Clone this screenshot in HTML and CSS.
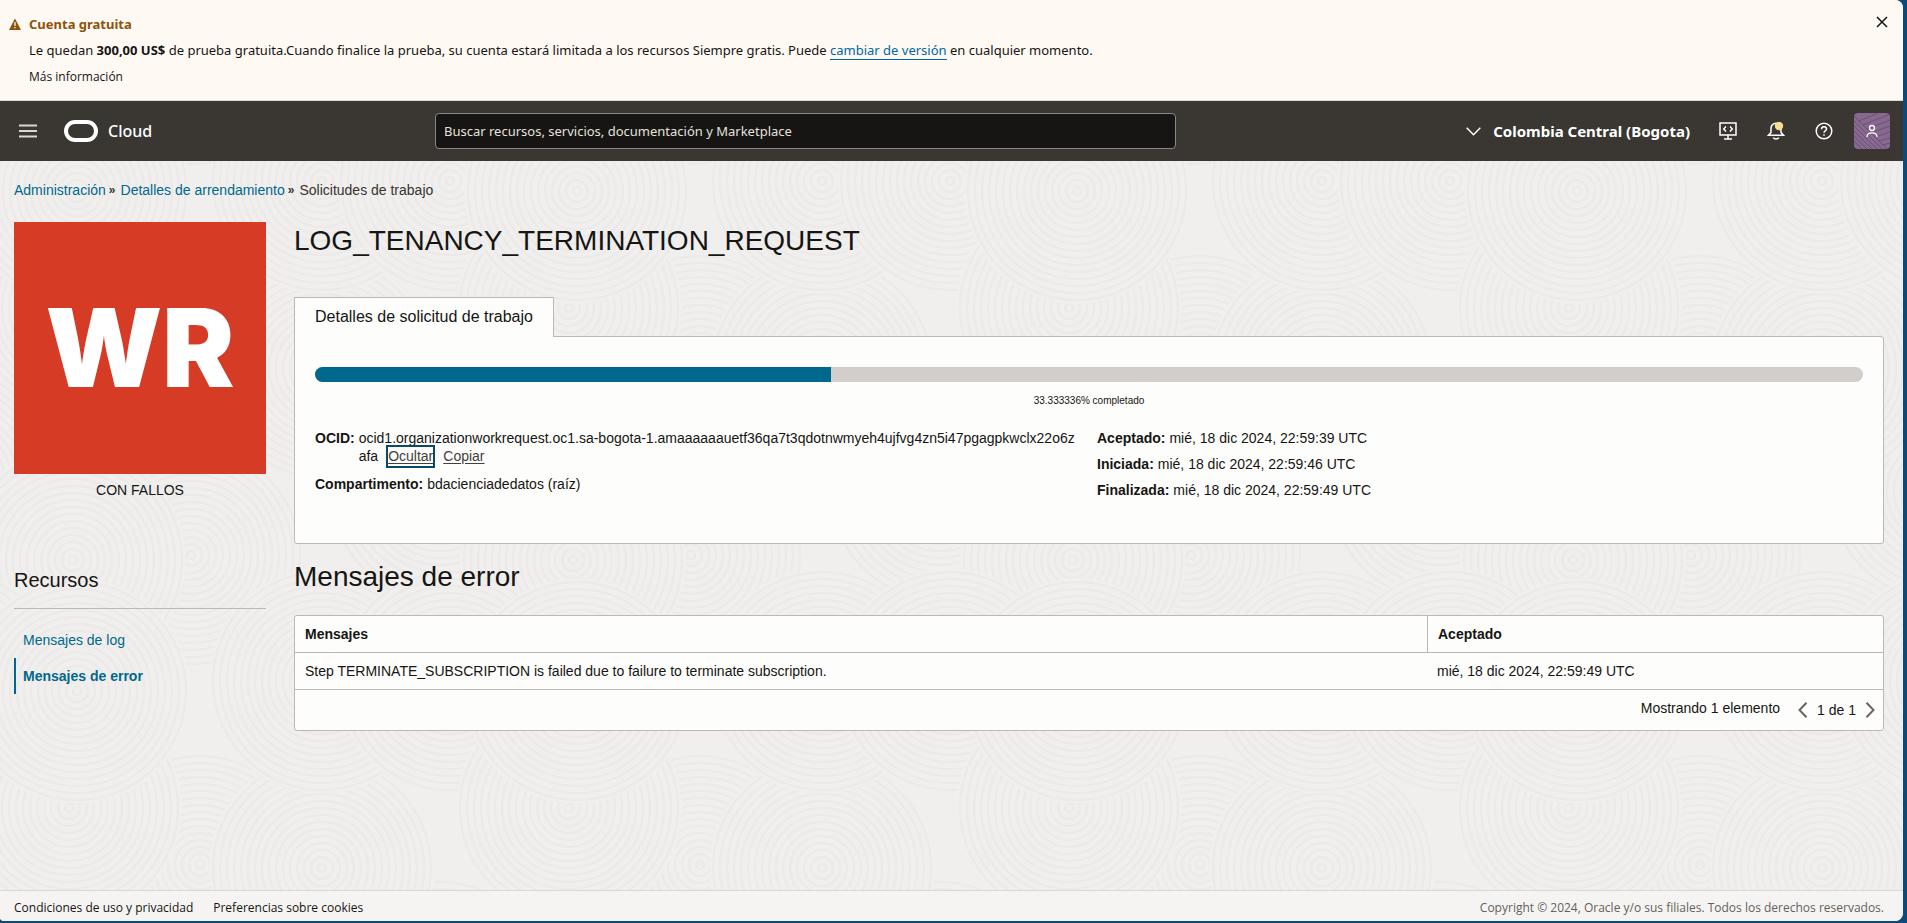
FILE: index.html
```html
<!DOCTYPE html>
<html lang="es">
<head>
<meta charset="utf-8">
<title>Solicitudes de trabajo</title>
<link rel="stylesheet" href="styles.css">
</head>
<body>
<div class="window">
  <section class="banner">
    <svg class="banner-icon" viewBox="0 0 12 12" aria-hidden="true"><path d="M6 0.5 12 12H0Z" fill="#8f520a"/><path d="M6 4v4M6 9v1.3" stroke="#fff9f3" stroke-width="1.3"/></svg>
    <div class="banner-body">
      <h2 class="banner-title">Cuenta gratuita</h2>
      <p class="banner-text">Le quedan <b>300,00 US$</b> de prueba gratuita.Cuando finalice la prueba, su cuenta estará limitada a los recursos Siempre gratis. Puede <a href="#">cambiar de versión</a> en cualquier momento.</p>
      <a class="banner-more" href="#">Más información</a>
    </div>
    <button class="banner-close" aria-label="Cerrar"><svg viewBox="0 0 12 12"><path d="M1 1 11 11M11 1 1 11" fill="none" stroke="#161513" stroke-width="1.5"/></svg></button>
  </section>

  <header class="topbar">
    <div class="brand">
      <button class="icon-button" aria-label="Menú"><svg width="18" height="14" viewBox="0 0 18 14"><path d="M0 1.5H18M0 7H18M0 12.5H18" stroke="#d9d7d4" stroke-width="2"/></svg></button>
      <svg class="oval" width="34" height="22" viewBox="0 0 34 22" aria-hidden="true"><rect x="2" y="2" width="30" height="18" rx="9" fill="none" stroke="#fff" stroke-width="4"/></svg>
      <span class="brand-name">Cloud</span>
    </div>
    <input class="search" type="text" aria-label="Buscar" placeholder="Buscar recursos, servicios, documentación y Marketplace">
    <div class="tools">
      <button class="region"><svg width="15" height="9" viewBox="0 0 15 9"><path d="M0.7 0.8 7.5 7.7 14.3 0.8" fill="none" stroke="#fff" stroke-width="1.5"/></svg>Colombia Central (Bogota)</button>
      <div class="tool-icons">
        <button class="icon-button" aria-label="Herramientas de desarrollador"><svg width="18" height="18" viewBox="0 0 18 18" fill="none" stroke="#fff" stroke-width="1.5"><path d="M1 1H17V13H1ZM9 13V17M5 17H13M7 4.5 4.7 7 7 9.5M11 4.5 13.3 7 11 9.5"/></svg></button>
        <button class="icon-button" aria-label="Anuncios"><svg width="18" height="18" viewBox="0 0 18 18" fill="none" stroke="#fff" stroke-width="1.5"><path d="M1.5 13.2H16.500L14 10.500V6.200A5 5 0 0 0 4 6.200V10.500ZM6.300 15.500A2.800 2 0 0 0 11.700 15.500"/><circle cx="12" cy="4" r="4.200" fill="#fbdc94" stroke="none"/></svg></button>
        <button class="icon-button" aria-label="Ayuda"><svg width="18" height="18" viewBox="0 0 18 18" fill="none" stroke="#fff" stroke-width="1.5"><circle cx="9" cy="9" r="7.800"/><path d="M6.500 7.200C6.500 3.800 11.500 4 11.500 7 11.500 9 9 8.700 9 10.800M9 12.200V13.700"/></svg></button>
        <button class="avatar" aria-label="Perfil"><svg width="36" height="36" viewBox="0 0 36 36" fill="none"><rect width="36" height="36" fill="#87698f"/><g stroke="#6d5176" stroke-width="1"><path d="M0 3 33 36M0 8 28 36M0 13 23 36M0 18 18 36M0 23 13 36M0 28 8 36M5 8 24 0M9 12 36 1M13 16 36 7M17 20 36 13M21 24 36 19M25 28 36 25M29 32 36 30"/></g><g stroke="#fff" stroke-width="1.300"><circle cx="18" cy="15" r="2.500"/><path d="M13 24C13 18.500 23 18.500 23 24"/></g></svg></button>
      </div>
    </div>
  </header>

  <main class="page">
    <svg class="texture" width="100%" height="100%" aria-hidden="true">
      <defs>
        <g id="rings"><circle r="113" fill="#f0efed" stroke="none"/><circle r="4"/><circle r="11"/><circle r="18"/><circle r="25"/><circle r="32"/><circle r="39"/><circle r="46"/><circle r="53"/><circle r="60"/><circle r="67"/><circle r="74"/><circle r="81"/><circle r="88"/><circle r="95"/><circle r="102"/><circle r="109"/></g>
        <g id="layer">
          <use href="#rings" x="440" y="330"/>
          <use href="#rings" x="200" y="204"/>
          <use href="#rings" x="322" y="207"/>
          <use href="#rings" x="191" y="394"/>
          <use href="#rings" x="73" y="399"/>
          <use href="#rings" x="69" y="147"/>
          <use href="#rings" x="322" y="20"/>
          <use href="#rings" x="450" y="20"/>
          <use href="#rings" x="77" y="30"/>
        </g>
        <pattern id="tile" width="500" height="500" patternUnits="userSpaceOnUse">
          <g fill="none" stroke="#ebeae8" stroke-width="2">
            <use href="#layer" x="-500" y="-500"/><use href="#layer" y="-500"/><use href="#layer" x="500" y="-500"/>
            <use href="#layer" x="-500"/><use href="#layer"/><use href="#layer" x="500"/>
            <use href="#layer" x="-500" y="500"/><use href="#layer" y="500"/><use href="#layer" x="500" y="500"/>
          </g>
        </pattern>
      </defs>
      <rect width="100%" height="100%" fill="url(#tile)"/>
    </svg>
    <div class="content">
      <nav class="crumbs" aria-label="Ruta"><a href="#">Administración</a><span class="sep">»</span><a href="#">Detalles de arrendamiento</a><span class="sep">»</span><span>Solicitudes de trabajo</span></nav>
      <div class="columns">
        <aside class="side">
          <div class="badge">WR</div>
          <p class="status">CON FALLOS</p>
          <h3 class="side-title">Recursos</h3>
          <ul class="side-links">
            <li><a href="#">Mensajes de log</a></li>
            <li class="active"><a href="#">Mensajes de error</a></li>
          </ul>
        </aside>
        <div class="detail">
          <h1 class="title">LOG_TENANCY_TERMINATION_REQUEST</h1>
          <button class="tab">Detalles de solicitud de trabajo</button>
          <section class="panel">
            <div class="bar"><div class="bar-fill" style="width:33.333336%"></div></div>
            <p class="bar-label">33.333336% completado</p>
            <div class="facts">
              <div class="fact-col">
                <div class="fact fact-long"><b>OCID:</b><span class="ocid">ocid1.organizationworkrequest.oc1.sa-bogota-1.amaaaaaauetf36qa7t3qdotnwmyeh4ujfvg4zn5i47pgagpkwclx22o6zafa<a class="focused" href="#">Ocultar</a><a href="#">Copiar</a></span></div>
                <div class="fact"><b>Compartimento:</b><span>bdacienciadedatos (raíz)</span></div>
              </div>
              <div class="fact-col">
                <div class="fact"><b>Aceptado:</b><span>mié, 18 dic 2024, 22:59:39 UTC</span></div>
                <div class="fact"><b>Iniciada:</b><span>mié, 18 dic 2024, 22:59:46 UTC</span></div>
                <div class="fact"><b>Finalizada:</b><span>mié, 18 dic 2024, 22:59:49 UTC</span></div>
              </div>
            </div>
          </section>
          <h2 class="subtitle">Mensajes de error</h2>
          <div class="card">
            <table class="grid">
              <thead><tr><th>Mensajes</th><th class="date">Aceptado</th></tr></thead>
              <tbody><tr><td>Step TERMINATE_SUBSCRIPTION is failed due to failure to terminate subscription.</td><td>mié, 18 dic 2024, 22:59:49 UTC</td></tr></tbody>
            </table>
            <div class="pager">
              <span>Mostrando 1 elemento</span>
              <div class="pages">
                <button class="icon-button" aria-label="Anterior"><svg width="10" height="16" viewBox="0 0 10 16"><path d="M8.500 0.700 1.500 8 8.500 15.300" fill="none" stroke="#6b6460" stroke-width="2"/></svg></button>
                <span>1 de 1</span>
                <button class="icon-button" aria-label="Siguiente"><svg width="10" height="16" viewBox="0 0 10 16"><path d="M1.500 0.700 8.500 8 1.500 15.300" fill="none" stroke="#6b6460" stroke-width="2"/></svg></button>
              </div>
            </div>
          </div>
        </div>
      </div>
    </div>
  </main>

  <footer class="footer">
    <a href="#">Condiciones de uso y privacidad</a>
    <a href="#">Preferencias sobre cookies</a>
    <span class="copyright">Copyright © 2024, Oracle y/o sus filiales. Todos los derechos reservados.</span>
  </footer>
</div>
</body>
</html>
```
FILE: styles.css
```css
* { box-sizing: border-box; }
body {
  margin: 0;
  min-height: 100vh;
  display: flex;
  padding: 0 4px 2px 0;
  background: #0b4a7b;
  font: 14px/18px "Liberation Sans", Arial, sans-serif;
  color: #161513;
}
h1, h2, h3, p, ul { margin: 0; padding: 0; font-weight: 400; }
button { font: inherit; color: inherit; background: none; border: 0; padding: 0; cursor: pointer; }
a { color: #00688c; text-decoration: none; }
svg { display: block; }
.icon-button { display: flex; }

.window {
  flex: 1;
  min-width: 0;
  display: flex;
  flex-direction: column;
  border-radius: 0 8px 8px 4px;
  overflow: hidden;
  background: #f0efed;
}

.banner {
  display: flex;
  padding: 12px 15px 10px 9px;
  border-bottom: 1px solid #dfdbd6;
  background: #fff9f3;
  font-family: "Noto Sans", "Open Sans", sans-serif;
  font-size: 13px;
}
.banner-icon { width: 12px; height: 12px; margin: 6px 8px 0 0; }
.banner-body { flex: 1; display: flex; flex-direction: column; align-items: flex-start; line-height: 26px; }
.banner-title { font-size: 13px; font-weight: 700; line-height: 25px; color: #8f520a; }
.banner-text a { color: #0068a4; border-bottom: 1px solid #0068a4; }
.banner-more { padding-top: 1px; font-family: "Open Sans", sans-serif; font-size: 12px; font-weight: 500; color: #161513; }
.banner-close { align-self: flex-start; width: 12px; height: 12px; margin-top: 4px; }

.topbar {
  display: grid;
  grid-template-columns: 435fr 741fr 727fr;
  align-items: center;
  height: 60px;
  background: #3a3631;
  color: #fff;
  font-family: "Noto Sans", "Open Sans", sans-serif;
}
.brand { display: flex; align-items: center; padding-left: 19px; }
.oval { margin: 0 10px 0 27px; }
.brand-name { font-size: 16px; font-weight: 500; }
.search {
  min-width: 0;
  height: 36px;
  padding: 0 8px;
  border: 1px solid #8b8783;
  border-radius: 4px;
  background: #161513;
  color: #fff;
  font: 13px "Noto Sans", "Open Sans", sans-serif;
}
.search::placeholder { color: #e4e2df; opacity: 1; }
.tools { display: flex; justify-content: flex-end; align-items: center; padding-right: 13px; gap: 29px; }
.region { display: flex; align-items: center; gap: 12px; font-size: 15px; font-weight: 700; white-space: nowrap; }
.tool-icons { display: flex; align-items: center; gap: 30px; }
.avatar { border-radius: 4px; overflow: hidden; margin-left: -9px; }

.page { flex: 1; position: relative; }
.texture { position: absolute; inset: 0; }
.content { position: relative; padding: 20px 19px 20px 14px; }
.crumbs { display: flex; color: #38342f; }
.sep { font-size: 12px; font-weight: 700; margin: 0 5px 0 3px; }

.columns { display: flex; gap: 28px; margin-top: 23px; }
.side { flex: 0 0 252px; }
.badge {
  display: flex;
  align-items: center;
  justify-content: center;
  height: 252px;
  background: #d63b25;
  color: #fff;
  font: 900 108px/120px Inter, sans-serif;
}
.status { margin-top: 7px; text-align: center; }
.side-title { margin-top: 69px; padding-bottom: 16px; border-bottom: 1px solid #bfb8b1; font-size: 20px; line-height: 24px; }
.side-links { list-style: none; margin-top: 13px; }
.side-links li { padding-left: 7px; border-left: 2px solid transparent; line-height: 36px; }
.side-links .active { border-color: #00688c; font-weight: 700; }

.detail { flex: 1; min-width: 0; }
.title { font-size: 28px; line-height: 38px; }
.tab {
  position: relative;
  display: block;
  height: 40px;
  margin: 37px 0 -1px;
  padding: 0 20px 1px;
  border: 1px solid #bfb8b1;
  border-bottom: 0;
  background: #fdfdfb;
  font-size: 16px;
}
.panel {
  padding: 30px 20px 44px;
  border: 1px solid #bfb8b1;
  border-radius: 0 3px 3px 3px;
  background: #fdfdfb;
}
.bar { height: 15px; border-radius: 8px; overflow: hidden; background: #d4ceca; }
.bar-fill { height: 100%; background: #00688c; }
.bar-label { margin-top: 10px; text-align: center; font-size: 10px; }
.facts { display: grid; grid-template-columns: 1fr 1fr; gap: 16px; margin-top: 19px; }
.fact-col { display: flex; flex-direction: column; gap: 8px; }
.fact { display: flex; gap: 4px; }
.fact-long { padding-bottom: 2px; }
.fact span { min-width: 0; word-break: break-all; }
.ocid a { margin-left: 10px; color: #45403b; text-decoration: underline; text-underline-offset: 2px; }
.ocid .focused { padding: 1px 0 2px; outline: 2px solid #0b4a66; }

.subtitle { margin: 15px 0 20px; font-size: 28px; line-height: 36px; }
.card { border: 1px solid #bfb8b1; border-radius: 3px; background: #fdfdfb; }
.grid { width: 100%; border-collapse: separate; border-spacing: 0; }
.grid th, .grid td { height: 37px; padding: 0 10px; text-align: left; border-bottom: 1px solid #bfb8b1; }
.grid .date { width: 456px; border-left: 1px solid #bfb8b1; }
.pager { display: flex; justify-content: flex-end; gap: 18px; padding: 9px 8px 11px; }
.pages { display: flex; align-items: center; gap: 9px; margin-top: 2px; }

.footer {
  display: flex;
  gap: 20px;
  padding: 8px 19px 4px 14px;
  border-top: 1px solid #d9d7d4;
  background: #f5f4f2;
  font: 12px/18px "Open Sans", "Noto Sans", sans-serif;
}
.footer a { color: #161513; }
.copyright { margin-left: auto; color: #665f5b; }
```
